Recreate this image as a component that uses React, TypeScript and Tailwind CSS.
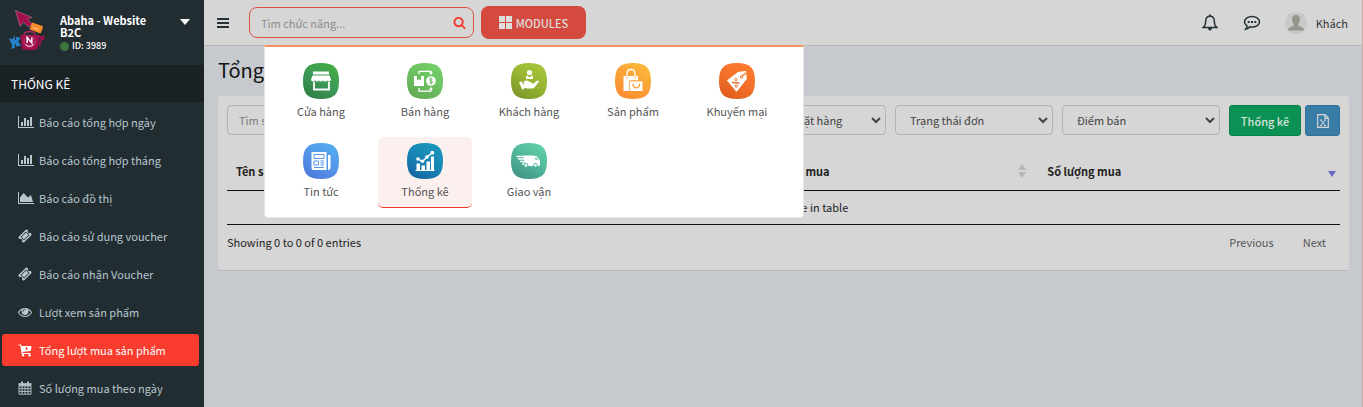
import React from "react";

type IconProps = { className?: string };

const BarChart = ({ className }: IconProps) => (
  <svg viewBox="0 0 2048 1792" className={className} fill="currentColor" aria-hidden="true">
    <path d="M640 896v512h-256v-512h256zm384-512v1024h-256v-1024h256zm1024 1152v128h-2048v-1536h128v1408h1920zm-640-896v768h-256v-768h256zm384-384v1152h-256v-1152h256z" />
  </svg>
);
const AreaChart = ({ className }: IconProps) => (
  <svg viewBox="0 0 2048 1792" className={className} fill="currentColor" aria-hidden="true">
    <path d="M2048 1536v128h-2048v-1536h128v1408h1920zm-384-1024l256 896h-1664v-576l448-576 576 576z" />
  </svg>
);
const Ticket = ({ className }: IconProps) => (
  <svg viewBox="0 0 1792 1792" className={className} fill="currentColor" aria-hidden="true">
    <path d="M1024 452l316 316-572 572-316-316zm-211 979l618-618q19-19 19-45t-19-45l-362-362q-18-18-45-18t-45 18l-618 618q-19 19-19 45t19 45l362 362q18 18 45 18t45-18zm889-637l-907 908q-37 37-90.5 37t-90.5-37l-126-126q56-56 56-136t-56-136-136-56-136 56l-125-126q-37-37-37-90.5t37-90.5l907-906q37-37 90.5-37t90.5 37l125 125q-56 56-56 136t56 136 136 56 136-56l126 125q37 37 37 90.5t-37 90.5z" />
  </svg>
);
const Eye = ({ className }: IconProps) => (
  <svg viewBox="0 0 1792 1792" className={className} fill="currentColor" aria-hidden="true">
    <path d="M1664 960q-152-236-381-353 61 104 61 225 0 185-131.5 316.5t-316.5 131.5-316.5-131.5-131.5-316.5q0-121 61-225-229 117-381 353 133 205 333.5 326.5t434.5 121.5 434.5-121.5 333.5-326.5zm-720-384q0-20-14-34t-34-14q-125 0-214.5 89.5t-89.5 214.5q0 20 14 34t34 14 34-14 14-34q0-86 61-147t147-61q20 0 34-14t14-34zm848 384q0 34-20 69-140 230-376.5 368.5t-499.5 138.5-499.5-139-376.5-368q-20-35-20-69t20-69q140-229 376.5-368t499.5-139 499.5 139 376.5 368q20 35 20 69z" />
  </svg>
);
const CartDown = ({ className }: IconProps) => (
  <svg viewBox="0 0 14 14" className={className} fill="currentColor" aria-hidden="true">
    <path
      fillRule="evenodd"
      d="M.5 1.5h2.200q.6 0 .8.9l.1.6h9.400q.6 0 .5.6l-.6 4q-.1.5-.6.5l-7.800.9.2.9h7.600v1H4.200q-.6 0-.7-.5L2.400 2.500H.5zM8 3.900v1.700H7L8.500 7.200 10 5.600H9V3.900z"
    />
    <circle cx="5" cy="12.200" r="1.200" />
    <circle cx="11.600" cy="12.200" r="1.200" />
  </svg>
);
const Calendar = ({ className }: IconProps) => (
  <svg viewBox="0 0 14 14" className={className} fill="none" stroke="currentColor" aria-hidden="true">
    <path d="M1 5h12v8.200H1zM4 5v8M7 5v8M10 5v8M1 7.700h12M1 10.400h12" strokeWidth=".9" />
    <path d="M.5 3.500h13" strokeWidth="2.600" />
    <path d="M4 .6v3M10 .6v3" strokeWidth="1.900" />
  </svg>
);
const Search = ({ className }: IconProps) => (
  <svg viewBox="0 0 1792 1792" className={className} fill="currentColor" aria-hidden="true">
    <path d="M1216 832q0-185-131.5-316.5t-316.5-131.5-316.5 131.5-131.5 316.5 131.5 316.5 316.5 131.5 316.5-131.5 131.5-316.5zm512 832q0 52-38 90t-90 38q-54 0-90-38l-343-342q-179 124-399 124-143 0-273.5-55.5t-225-150-150-225-55.5-273.5 55.5-273.5 150-225 225-150 273.5-55.5 273.5 55.5 225 150 150 225 55.5 273.5q0 220-124 399l343 343q37 37 37 90z" />
  </svg>
);

const Logo = () => (
  <svg viewBox="0 0 40 42" className="h-[42px] w-10 shrink-0" aria-hidden="true">
    <path d="M7.500 1.500l16.500 7-4.800 1.500 5 5-3.700 3-5-5-3.500 4.500z" fill="#a30f4e" stroke="#c58ba3" strokeWidth=".5" />
    <g transform="rotate(20 28 18.500)">
      <rect x="22.500" y="15" width="12" height="7.500" rx="1" fill="#f58a2b" />
      <path d="M25 19.500h6" stroke="#ffc98f" strokeWidth="1" />
    </g>
    <path d="M16 26.500q0-4 5.500-4t5.500 4" fill="none" stroke="#b0285e" strokeWidth="1.500" />
    <path d="M12.500 26h19l-2 14q-7.500 2-15.500 0z" fill="#a30f4e" />
    <path d="M31 28h5l-1 2.500h-2.600l-.9 6.500" fill="none" stroke="#a30f4e" strokeWidth="1.800" />
    <path d="M1 29.500l4 .4L7 26v13l-3.600 1 .6-4zM8 28l4.500.5-2.200 4 2.700 4L8 37.500zM5 31h5v4H5z" fill="#2680c8" />
    <circle cx="21.500" cy="32.500" r="5.600" fill="none" stroke="#c9668f" strokeWidth=".6" />
    <path d="M19.200 34v-5.500l4.600 5.500v-5.500" fill="none" stroke="#fff" strokeWidth="1.500" />
    <path d="M17.500 35.500q4 3.500 8 0" fill="none" stroke="#fff" strokeWidth="1" />
  </svg>
);

const menu = [
  { label: "Báo cáo tổng hợp ngày", Icon: BarChart, wide: true },
  { label: "Báo cáo tổng hợp tháng", Icon: BarChart, wide: true },
  { label: "Báo cáo đồ thị", Icon: AreaChart, wide: true },
  { label: "Báo cáo sử dụng voucher", Icon: Ticket },
  { label: "Báo cáo nhận Voucher", Icon: Ticket },
  { label: "Lượt xem sản phẩm", Icon: Eye },
  { label: "Tổng lượt mua sản phẩm", Icon: CartDown, active: true },
  { label: "Số lượng mua theo ngày", Icon: Calendar },
];

const modules = [
  {
    label: "Cửa hàng",
    from: "#2e7d43",
    mid: "#3d9a58",
    to: "#43ad42",
    art: (
      <>
        <path d="M10 8.500h16v3H10zM9.500 12.500h17l1.500 4q0 2-2 2t-2-1.500q0 1.500-2 1.500t-2-1.500q0 1.500-2 1.500t-2-1.500q0 1.500-2 1.500T12 17q0 1.500-2 1.500t-2-2z" fill="#fff" />
        <path d="M11 19v7.500h15V19" fill="none" stroke="#fff" strokeWidth="1.800" />
      </>
    ),
  },
  {
    label: "Bán hàng",
    from: "#62a955",
    mid: "#6cc062",
    to: "#74d068",
    art: (
      <>
        <path d="M7 13h3v4.500l2-1.300 2 1.300V13h3v10H7z" fill="#fff" />
        <circle cx="24" cy="18" r="4.800" fill="#fff" />
        <path d="M25.600 16q-3-1.300-3 .5 0 1 1.500 1.500 1.600.6 1.500 1.600-.3 1.400-3.200.3M24 14.500v7" fill="none" stroke="#65b55b" strokeWidth="1" />
        <path d="M12 11V8.300h12v2.200M12 25v3.200h12v-2.500" fill="none" stroke="#fff" strokeWidth="1.300" />
        <path d="M22 9.500h4L24 12zM22 26.500h4L24 24z" fill="#fff" />
      </>
    ),
  },
  {
    label: "Khách hàng",
    from: "#7b9428",
    mid: "#97b432",
    to: "#a9c63e",
    art: (
      <>
        <circle cx="18.500" cy="9.500" r="2.600" fill="#fff" />
        <path d="M15 13.500q0-1 1-1l2.500 1.700 2.500-1.700q1 0 1 1v2.500h-7zM12.500 19q2-2.200 4.500-1l2 1q2 .2 2 1.500h1.500l3.500-2.700q2-.8 2 .7l-4.500 6q-1 1-3 1h-5L13 24zM8 19.500l2.500-1.300 3.500 6.500-2.500 2.300z" fill="#fff" />
      </>
    ),
  },
  {
    label: "Sản phẩm",
    from: "#fb8a30",
    mid: "#fba136",
    to: "#fbbb3c",
    art: (
      <>
        <path d="M8.500 13h14.500v4.500h-7V28h-7.500z" fill="#fff" />
        <path d="M12 15v-4.500q0-4 4-4t4 4V15" fill="none" stroke="#fff" strokeWidth="1.300" />
        <path d="M12 13.500v2M20 13.500v2" stroke="#fb9a34" strokeWidth="1" />
        <rect x="15" y="18.300" width="12.500" height="9.700" fill="#fff" />
        <path d="M14.400 28V17.800h9" fill="none" stroke="#fb9a34" strokeWidth=".8" />
        <path d="M18 20.500q0 4.300 3.300 4.300t3.300-4.300" fill="none" stroke="#fb9a34" strokeWidth="1.200" />
      </>
    ),
  },
  {
    label: "Khuyến mại",
    from: "#dd5a1c",
    mid: "#f3702a",
    to: "#ff7d2d",
    art: (
      <>
        <path d="M8.500 17.500L19 9.500l7.500-1 .8 7.500L17.500 28.300z" fill="#fff" strokeLinejoin="round" stroke="#fff" />
        <path d="M22 14l7-6" stroke="#f3702a" strokeWidth="1.700" />
        <path d="M23.500 12.500l4.500-4" stroke="#fff" strokeWidth=".8" />
        <circle cx="22.500" cy="14" r="1.200" fill="#fff" stroke="#f3702a" />
        <path d="M13 19.500l7.500.5" stroke="#f3702a" strokeWidth="1.300" />
        <circle cx="16.800" cy="16.500" r="1.200" fill="none" stroke="#f3702a" />
        <circle cx="17.300" cy="23" r="1.200" fill="none" stroke="#f3702a" />
      </>
    ),
  },
  {
    label: "Tin tức",
    from: "#4c78dc",
    mid: "#5496e8",
    to: "#53adf0",
    art: (
      <>
        <path d="M8.500 9h15v18h-13q-2 0-2-2zM25 12h2.500v13q0 2-2.500 2z" fill="#fff" />
        <path d="M11 11.500h10v4H11zM11 18h4.500v4H11zM17.500 18H21M17.500 20H21M17.500 22H21M11 24.500h10" fill="none" stroke="#5496e8" strokeWidth="1" />
      </>
    ),
  },
  {
    label: "Thống kê",
    from: "#1464a0",
    mid: "#1785b4",
    to: "#1a97bd",
    active: true,
    art: (
      <>
        <path d="M9.500 20.500h3.500V27H9.500zM14.500 22.500H18V27h-3.500zM19.500 18.500H23V27h-3.500zM24 13.500h3V27h-3zM8.500 27h19v1h-19z" fill="#fff" />
        <path d="M11 16l4.500 2.500L20 14l5-4" fill="none" stroke="#fff" strokeWidth="1.400" />
        <g fill="#fff">
          <circle cx="11" cy="16" r="1.800" />
          <circle cx="15.500" cy="18.300" r="1.800" />
          <circle cx="20" cy="14" r="1.800" />
          <circle cx="25.300" cy="9.700" r="1.900" />
        </g>
      </>
    ),
  },
  {
    label: "Giao vận",
    from: "#3f9384",
    mid: "#52b59b",
    to: "#62d2a8",
    art: (
      <>
        <path d="M12.500 12.500h9q4 0 5 1.500l2.500 3.500v5l-2 .5h-13z" fill="#fff" />
        <path d="M5.500 13.500H14M7 16h7M9 18.500h6M11 21h5" stroke="#fff" strokeWidth="1.300" />
        <circle cx="15" cy="22.300" r="1.900" fill="#fff" stroke="#52b59b" />
        <circle cx="24.500" cy="22.300" r="1.900" fill="#fff" stroke="#52b59b" />
        <path d="M24 14.500l2 0 1.500 2.500H24z" fill="#8fd4bf" />
      </>
    ),
  },
];

const ModuleMenu = () => (
  <nav
    aria-label="Modules"
    className="absolute top-[38px] left-[15px] z-10 grid w-[540px] grid-cols-5 gap-x-[10px] gap-y-[9px] rounded-b border border-t-2 border-[#e4e4e4] border-t-[#f5935c] bg-white pt-[10px] pr-[19px] pb-[9px] pl-[9px]"
  >
    {modules.map((m, i) => (
      <a
        key={m.label}
        href="#"
        className={`flex h-[71px] flex-col items-center rounded-[5px] border-b pt-[6px] text-[11px] leading-5 text-[#555] ${
          m.active ? "border-[#f8392c] bg-[#fcf0ee]" : "border-transparent"
        }`}
      >
        <svg viewBox="0 0 36 36" className="mb-[2px] size-9 shrink-0" aria-hidden="true">
          <defs>
            <linearGradient id={`tile${i}`} x1=".2" y1="1" x2=".8" y2="0">
              <stop offset="0" stopColor={m.from} />
              <stop offset=".5" stopColor={m.mid} />
              <stop offset="1" stopColor={m.to} />
            </linearGradient>
          </defs>
          <path d="M18 0C31 0 36 5 36 18s-5 18-18 18S0 31 0 18 5 0 18 0z" fill={`url(#tile${i})`} />
          {m.art}
        </svg>
        {m.label}
      </a>
    ))}
  </nav>
);

const Filter = ({ label }: { label: string }) => (
  <div className="relative min-w-0 flex-1">
    <select
      aria-label={label}
      className="h-[30px] w-full appearance-none rounded border border-[#b0b3bd] bg-transparent pr-6 pl-[14px] text-[11px] text-[#444]"
    >
      <option>{label}</option>
    </select>
    <svg viewBox="0 0 10 7" className="pointer-events-none absolute top-3 right-[5px] h-[7px] w-[10px]" fill="none" aria-hidden="true">
      <path d="M1 1l4 4 4-4" stroke="#444" strokeWidth="2" />
    </svg>
  </div>
);

const SortIcon = () => (
  <svg viewBox="0 0 8 14" className="h-[14px] w-2" fill="#b5b5b5" aria-hidden="true">
    <path d="M0 6l4-6 4 6zM0 8h8l-4 6z" />
  </svg>
);

export default function App() {
  return (
    <div className="flex min-h-screen bg-[#c6cacf] font-['Source_Sans_Pro','Noto_Sans_CJK_SC',sans-serif] text-[11px] leading-5 text-[#222]">
      <aside className="w-[204px] shrink-0 bg-[#222d32] text-[#b8c7ce]">
        <div className="flex h-[65px] items-start pt-[9px] pl-2 text-white">
          <Logo />
          <div className="ml-3 flex-1 pt-[5px] leading-3">
            <p className="max-w-[100px] font-bold">Abaha - Website B2C</p>
            <p className="mt-[2px] flex items-center gap-[3px] text-[9px] font-medium">
              <span className="size-[9px] rounded-full bg-[#3c763d]" />
              ID: 3989
            </p>
          </div>
          <button type="button" aria-label="Chọn website" className="mt-[10px] mr-[14px]">
            <svg viewBox="0 0 10 6" className="h-[6px] w-[10px]" fill="#fff" aria-hidden="true">
              <path d="M0 0h10L5 6z" />
            </svg>
          </button>
        </div>
        <h2 className="flex h-[37px] items-center bg-[#1a2226] pl-[11px] text-[12px] text-white">THỐNG KÊ</h2>
        <ul className="flex flex-col gap-[6px] pt-1 pr-[5px] pl-[2px]">
          {menu.map(({ label, Icon, wide, active }) => (
            <li key={label}>
              <a
                href="#"
                className={`flex h-8 items-center rounded-[3px] pl-4 ${active ? "bg-[#f93c2e] text-white" : ""}`}
              >
                <span className="flex w-[21px]">
                  <Icon className={wide ? "h-[14px] w-4" : "size-[14px]"} />
                </span>
                {label}
              </a>
            </li>
          ))}
        </ul>
      </aside>

      <div className="flex min-w-0 flex-1 flex-col border-r border-[#cfa9a4]">
        <header className="flex h-[46px] items-center border-b border-[#b5b9be] bg-[#d6d6d6] pr-[14px] pl-[13px]">
          <button type="button" aria-label="Thu gọn menu" className="flex w-8">
            <svg viewBox="0 0 12 10" className="h-[10px] w-3" fill="#263238" aria-hidden="true">
              <path d="M0 0h12v2H0zM0 4h12v2H0zM0 8h12v2H0z" />
            </svg>
          </button>
          <div className="relative flex">
            <label className="flex h-[31px] w-[225px] items-center rounded-lg border border-[#dc5247] pr-[7px] pl-[11px]">
              <input
                aria-label="Tìm chức năng"
                placeholder="Tìm chức năng..."
                className="min-w-0 flex-1 bg-transparent text-[11px] outline-none placeholder:text-[#8c8c8c]"
              />
              <Search className="size-[13px] text-[#f8392c]" />
            </label>
            <ModuleMenu />
          </div>
          <button
            type="button"
            className="ml-[7px] flex h-[33px] w-[105px] items-center justify-center gap-1 rounded-lg bg-[#d54a3f] text-[11px] font-medium text-[#dedede]"
          >
            <svg viewBox="0 0 13 13" className="size-[13px]" fill="currentColor" aria-hidden="true">
              <path d="M0 0h6v6H0zM7 0h6v6H7zM0 7h6v6H0zM7 7h6v6H7z" />
            </svg>
            MODULES
          </button>
          <div className="ml-auto flex items-center text-[#263238]">
            <button type="button" aria-label="Thông báo">
              <svg viewBox="0 0 16 17" className="h-[17px] w-4" fill="none" stroke="currentColor" strokeWidth="1.500" aria-hidden="true">
                <path d="M8 2.200c-3.200 0-4.300 2.300-4.300 5 0 3.300-.9 5-2.400 6.200h13.400c-1.500-1.200-2.400-2.900-2.400-6.200 0-2.700-1.100-5-4.300-5z" />
                <path d="M8 .5v2" strokeWidth="1.800" />
                <path d="M6.300 14h3.400q-.2 2.300-1.700 2.300T6.300 14z" fill="currentColor" strokeWidth=".6" />
              </svg>
            </button>
            <button type="button" aria-label="Tin nhắn" className="ml-[25px]">
              <svg viewBox="0 0 18 16" className="h-4 w-[18px]" fill="none" stroke="currentColor" strokeWidth="1.500" aria-hidden="true">
                <path d="M9 1.600c4.300 0 7.500 2.200 7.500 5.200S13.300 12 9 12q-1.100 0-2.200-.3-1.700 2.300-4.100 2.600 1.300-1.600 1.300-3.500C2.400 9.800 1.500 8.400 1.500 6.800c0-3 3.200-5.200 7.500-5.200z" />
                <path d="M4.700 5.900h2v2h-2zM8 5.900h2v2H8zM11.300 5.900h2v2h-2z" fill="currentColor" stroke="none" />
              </svg>
            </button>
            <a href="#" className="ml-6 flex items-center gap-[9px] text-[#333]">
              <svg viewBox="0 0 22 22" className="size-[22px]" aria-hidden="true">
                <circle cx="11" cy="11" r="11" fill="#c8c8c8" />
                <path d="M11 3q4 0 4 4.500 0 2.700-1.700 4.500v1.800l4.400 1.900q1.500.7 1.300 2.800H3q-.2-2.100 1.300-2.800l4.400-1.900V12Q7 10.200 7 7.500 7 3 11 3z" fill="#96938e" />
              </svg>
              Khách
            </a>
          </div>
        </header>

        <main className="pr-[13px] pl-[14px]">
          <h1 className="pt-[9px] pb-[11px] text-[20px] leading-[30px] text-[#111]">Tổng lượt mua sản phẩm</h1>
          <section className="rounded-[3px] border-b border-[#b5b9be] bg-[#d6d6d6] px-[9px] pt-[9px] pb-[18px]">
            <form className="flex items-start gap-[9px]">
              <div className="min-w-0 flex-1">
                <input
                  aria-label="Tìm sản phẩm"
                  placeholder="Tìm sản phẩm"
                  className="h-[30px] w-full rounded border border-[#b0b3bd] bg-transparent px-[11px] text-[11px] placeholder:text-[#7c7c7c]"
                />
              </div>
              <Filter label="Từ ngày" />
              <Filter label="Đến ngày" />
              <Filter label="Trạng thái đặt hàng" />
              <Filter label="Trạng thái đơn" />
              <Filter label="Điểm bán" />
              <div className="flex gap-1">
                <button type="button" className="h-[31px] w-[72px] rounded-[3px] border border-[#078148] bg-[#0a9153] text-[11px] font-medium text-[#d9e4de]">
                  Thống kê
                </button>
                <button type="button" aria-label="Xuất Excel" className="flex h-[31px] w-[35px] items-center justify-center rounded-[3px] border border-[#34729a] bg-[#397da6]">
                  <svg viewBox="0 0 12 14" className="h-[14px] w-3" fill="none" stroke="#d6d6d6" strokeWidth="1.200" aria-hidden="true">
                    <path d="M.7.700h7.300l3.300 3.300v9.300H.7zM7.800.8v3.500h3.400" />
                    <path d="M3.700 6l4.300 5.500M8 6l-4.300 5.500M3 6h2M7 6h2M3 11.500h2M7 11.500h2" strokeWidth="1" />
                  </svg>
                </button>
              </div>
            </form>

            <table className="mt-4 w-full table-fixed border-collapse">
              <thead>
                <tr className="h-[38px] border-b border-[#111] text-left">
                  <th className="w-[47.5%] pl-[9px] font-bold">Tên sản phẩm</th>
                  <th className="w-[25.4%] pl-[9px] font-bold">
                    <span className="flex items-center justify-between pr-3">
                      Số lượt mua
                      <SortIcon />
                    </span>
                  </th>
                  <th className="pl-[9px] font-bold">
                    <span className="flex items-center justify-between pr-1">
                      Số lượng mua
                      <svg viewBox="0 0 8 6" className="mt-[6px] h-[6px] w-2" fill="#6a6bc4" aria-hidden="true">
                        <path d="M0 0h8L4 6z" />
                      </svg>
                    </span>
                  </th>
                </tr>
              </thead>
              <tbody>
                <tr className="h-[34px] border-b border-[#111]">
                  <td colSpan={3} className="text-center">No data available in table</td>
                </tr>
              </tbody>
            </table>

            <div className="flex items-start justify-between pt-[7px]">
              <p>Showing 0 to 0 of 0 entries</p>
              <div className="flex gap-[29px] pr-[14px] text-[#555]">
                <button type="button">Previous</button>
                <button type="button">Next</button>
              </div>
            </div>
          </section>
        </main>
      </div>
    </div>
  );
}
